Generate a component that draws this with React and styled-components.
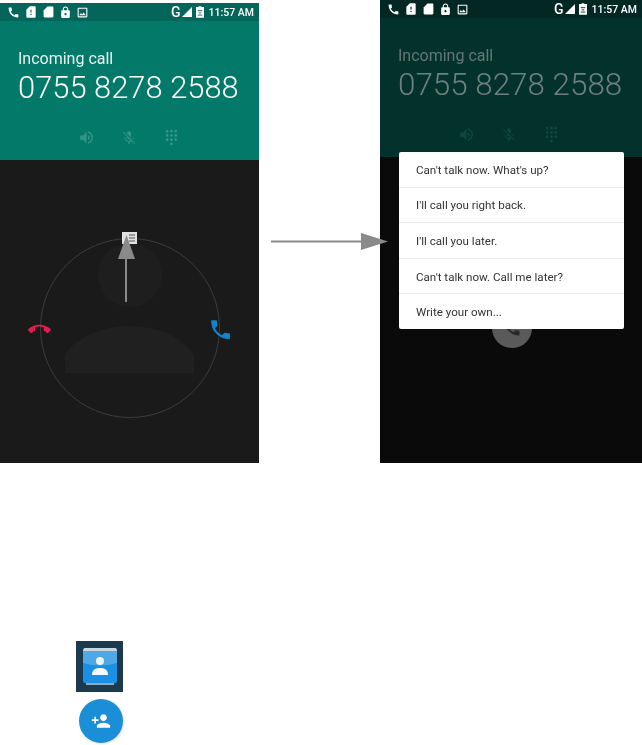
import React from "react";
import styled, { createGlobalStyle } from "styled-components";
import {
  MdCall,
  MdSimCardAlert,
  MdLock,
  MdOutlinePhoto,
  MdVolumeUp,
  MdMicOff,
  MdDialpad,
  MdPersonAdd,
  MdSignalCellular4Bar,
} from "react-icons/md";

const replies = [
  "Can't talk now. What's up?",
  "I'll call you right back.",
  "I'll call you later.",
  "Can't talk now. Call me later?",
  "Write your own...",
];

const callPath =
  "M6.62 10.79c1.44 2.83 3.76 5.14 6.59 6.59l2.2-2.2c.27-.27.67-.36 1.02-.24 1.12.37 2.33.57 3.57.57.55 0 1 .45 1 1V20c0 .55-.45 1-1 1-9.39 0-17-7.61-17-17 0-.55.45-1 1-1h3.5c.55 0 1 .45 1 1 0 1.25.2 2.45.57 3.57.11.35.03.74-.25 1.02l-2.2 2.2z";
const hangupPath =
  "M12 9c-1.6 0-3.15.25-4.6.72v3.1c0 .39-.23.74-.56.9-.98.49-1.87 1.12-2.66 1.85-.18.18-.43.28-.7.28-.28 0-.53-.11-.71-.29L.29 13.08c-.18-.17-.29-.42-.29-.7 0-.28.11-.53.29-.71C3.34 8.78 7.46 7 12 7s8.66 1.78 11.71 4.67c.18.18.29.43.29.71 0 .28-.11.53-.29.71l-2.48 2.48c-.18.18-.43.29-.71.29-.27 0-.52-.11-.7-.28-.79-.74-1.69-1.36-2.67-1.85-.33-.16-.56-.5-.56-.9v-3.1C15.15 9.25 13.6 9 12 9z";

const SdCardIcon = () => (
  <svg width="13" height="14" viewBox="0 0 24 24" fill="currentColor">
    <path d="M19 2H10L3 9v11c0 1.1.9 2 2 2h14c1.1 0 2-.9 2-2V4c0-1.1-.9-2-2-2z" />
  </svg>
);

const BatteryGlyph = ({ dim }) => (
  <BatterySvg viewBox="0 0 9 13">
    <path d="M3 0h3v1h3v12H0V1h3z" fill="#fff" />
    <path d="M2 5h5M3 7.5h3M2 10h5" stroke={dim ? "#032722" : "#04665a"} strokeWidth="1" />
  </BatterySvg>
);

const CallHeader = ({ dim, numberSize }) => (
  <Header $dim={dim}>
    <StatusBar $dim={dim}>
      <StatusIcons>
        <MdCall size={13} />
        <MdSimCardAlert size={14} />
        <SdCardIcon />
        <MdLock size={13} />
        <MdOutlinePhoto size={13} />
      </StatusIcons>
      <StatusRight>
        <NetworkType>G</NetworkType>
        <MdSignalCellular4Bar size={12} />
        <BatteryGlyph dim={dim} />
        <Clock>11:57 AM</Clock>
      </StatusRight>
    </StatusBar>
    <CallerInfo $dim={dim}>
      <CallLabel>Incoming call</CallLabel>
      <CallNumber $size={numberSize}>0755 8278 2588</CallNumber>
    </CallerInfo>
    <Actions $dim={dim}>
      <MdVolumeUp size={17} />
      <MdMicOff size={16} />
      <MdDialpad size={17} />
    </Actions>
  </Header>
);

const GlowPad = () => (
  <PadDrawing viewBox="0 0 259 303">
    <circle cx="130" cy="115" r="32" fill="#1e1e1e" />
    <path d="M65 213 V196 C72 180 100 166 130 166 C160 166 187 180 194 196 V213 Z" fill="#202020" />
    <circle cx="130" cy="168" r="89.5" fill="none" stroke="#3c3c3c" strokeWidth="1" />
    <rect x="122" y="72" width="15" height="12" fill="#e2e2e2" />
    <path d="M129 75h6M129 78h6M129 81h6" stroke="#555" strokeWidth="1.2" />
    <path d="M126 142 V98" stroke="#8a8a8a" strokeWidth="2" />
    <path d="M126.5 75 L118 99 H135 Z" fill="#8a8a8a" />
    <path d={hangupPath} fill="#e8194f" transform="translate(28 158) scale(0.95)" />
    <path d={callPath} fill="#1383cf" transform="translate(208 157) scale(1.05)" />
  </PadDrawing>
);

const App = () => (
  <Page>
    <GlobalStyle />
    <Screens>
      <LeftPhone>
        <CallHeader numberSize={30.9} />
        <GlowPad />
      </LeftPhone>
      <ForwardArrow viewBox="0 0 118 20">
        <path d="M0 9.5 H92" stroke="#8a8a8a" strokeWidth="2" />
        <path d="M90 1 L117 9.5 L90 18 Z" fill="#8a8a8a" />
      </ForwardArrow>
      <RightPhone>
        <CallHeader dim numberSize={31.4} />
        <DarkBody>
          <AnswerHandle>
            <MdCall size={20} />
          </AnswerHandle>
          <ReplyMenu>
            {replies.map((text) => (
              <ReplyRow key={text}>{text}</ReplyRow>
            ))}
          </ReplyMenu>
        </DarkBody>
      </RightPhone>
    </Screens>
    <Legend>
      <ContactsIcon viewBox="0 0 47 51">
        <rect width="47" height="51" fill="#1c3a4d" />
        <path d="M9 7 H39 Q41 7 41 10 V12 H7 V10 Q7 7 9 7 Z" fill="#c7d6df" />
        <path d="M7 10 H41 V40 H7 Z" fill="#4fa8e6" />
        <path d="M7 22 Q24 27 41 22 L41 40 Q41 42 39 42 H9 Q7 42 7 40 Z" fill="#1a8fe3" />
        <path d="M10 42 H38 V44 H10 Z" fill="#8fa9ba" />
        <circle cx="24" cy="20" r="4" fill="#e9f3fa" />
        <path d="M16 34 C16 28 20 27 24 27 C28 27 32 28 32 34 Z" fill="#f3f8fc" />
      </ContactsIcon>
      <AddContactButton>
        <MdPersonAdd size={20} />
      </AddContactButton>
    </Legend>
  </Page>
);

export default App;

const GlobalStyle = createGlobalStyle`
  html, body {
    margin: 0;
    padding: 0;
    background: #fff;
    font-family: Roboto, "Liberation Sans", sans-serif;
  }
`;

const Page = styled.div`
  width: 642px;
  height: 745px;
  overflow: hidden;
  position: relative;
`;

const Screens = styled.div`
  display: flex;
  justify-content: space-between;
  align-items: flex-start;
  height: 463px;
`;

const LeftPhone = styled.div`
  width: 259px;
  margin-top: 3px;
  display: flex;
  flex-direction: column;
  background: #1a1a1a;
  filter: blur(0.3px);
`;

const RightPhone = styled.div`
  width: 262px;
  height: 463px;
  display: flex;
  flex-direction: column;
  background: #0a0a0a;
  filter: blur(0.3px);
`;

const Header = styled.div`
  height: 157px;
  flex-shrink: 0;
  display: flex;
  flex-direction: column;
  background: ${(p) => (p.$dim ? "#03322d" : "#03796a")};
`;

const StatusBar = styled.div`
  height: 18px;
  padding: 0 5px 0 7px;
  display: flex;
  align-items: center;
  justify-content: space-between;
  color: #fff;
  background: ${(p) => (p.$dim ? "#032722" : "#04665a")};
`;

const StatusIcons = styled.div`
  display: flex;
  align-items: center;
  gap: 4px;
`;

const StatusRight = styled.div`
  display: flex;
  align-items: center;
`;

const NetworkType = styled.span`
  font-size: 14px;
  font-weight: 500;
`;

const BatterySvg = styled.svg`
  width: 8px;
  height: 12px;
  margin: 0 5px 0 3px;
`;

const Clock = styled.span`
  font-size: 10.5px;
  font-weight: 500;
`;

const CallerInfo = styled.div`
  padding: 28px 0 0 18px;
  color: ${(p) => (p.$dim ? "#6f7f7c" : "#fff")};
`;

const CallLabel = styled.div`
  font-size: 16px;
  line-height: 19px;
  opacity: 0.9;
`;

const CallNumber = styled.div`
  font-size: ${(p) => p.$size}px;
  font-weight: 300;
  line-height: 36px;
  margin-top: 2px;
  white-space: nowrap;
`;

const Actions = styled.div`
  width: 102px;
  margin: 23px 0 0 78px;
  display: flex;
  align-items: center;
  justify-content: space-between;
  color: ${(p) => (p.$dim ? "#10463f" : "#339488")};
`;

const PadDrawing = styled.svg`
  display: block;
  width: 259px;
  height: 303px;
`;

const ForwardArrow = styled.svg`
  position: absolute;
  z-index: 1;
  left: 271px;
  top: 232px;
  width: 118px;
  height: 20px;
`;

const DarkBody = styled.div`
  flex: 1;
  position: relative;
`;

const ReplyMenu = styled.div`
  position: absolute;
  left: 19px;
  top: -5px;
  width: 225px;
  height: 177px;
  background: #fff;
  border-radius: 2px;
  display: flex;
  flex-direction: column;
`;

const ReplyRow = styled.div`
  flex: 1;
  display: flex;
  align-items: center;
  padding: 1px 0 0 17px;
  font-size: 11.6px;
  color: #333;
  border-bottom: 1px solid #e6e6e6;

  &:last-child {
    border-bottom: none;
  }
`;

const AnswerHandle = styled.div`
  position: absolute;
  left: 112px;
  top: 151px;
  width: 40px;
  height: 40px;
  border-radius: 50%;
  background: #5a5a5a;
  color: #2a2a2a;
  display: flex;
  align-items: center;
  justify-content: center;
`;

const Legend = styled.div`
  padding: 178px 0 0 76px;
  display: flex;
  flex-direction: column;
  align-items: flex-start;
  gap: 7px;
`;

const ContactsIcon = styled.svg`
  display: block;
  width: 47px;
  height: 51px;
`;

const AddContactButton = styled.div`
  width: 44px;
  height: 44px;
  margin-left: 3px;
  border-radius: 50%;
  background: #1a8fd8;
  color: #fff;
  box-shadow: 1px 1px 2px #ddd;
  display: flex;
  align-items: center;
  justify-content: center;
`;
